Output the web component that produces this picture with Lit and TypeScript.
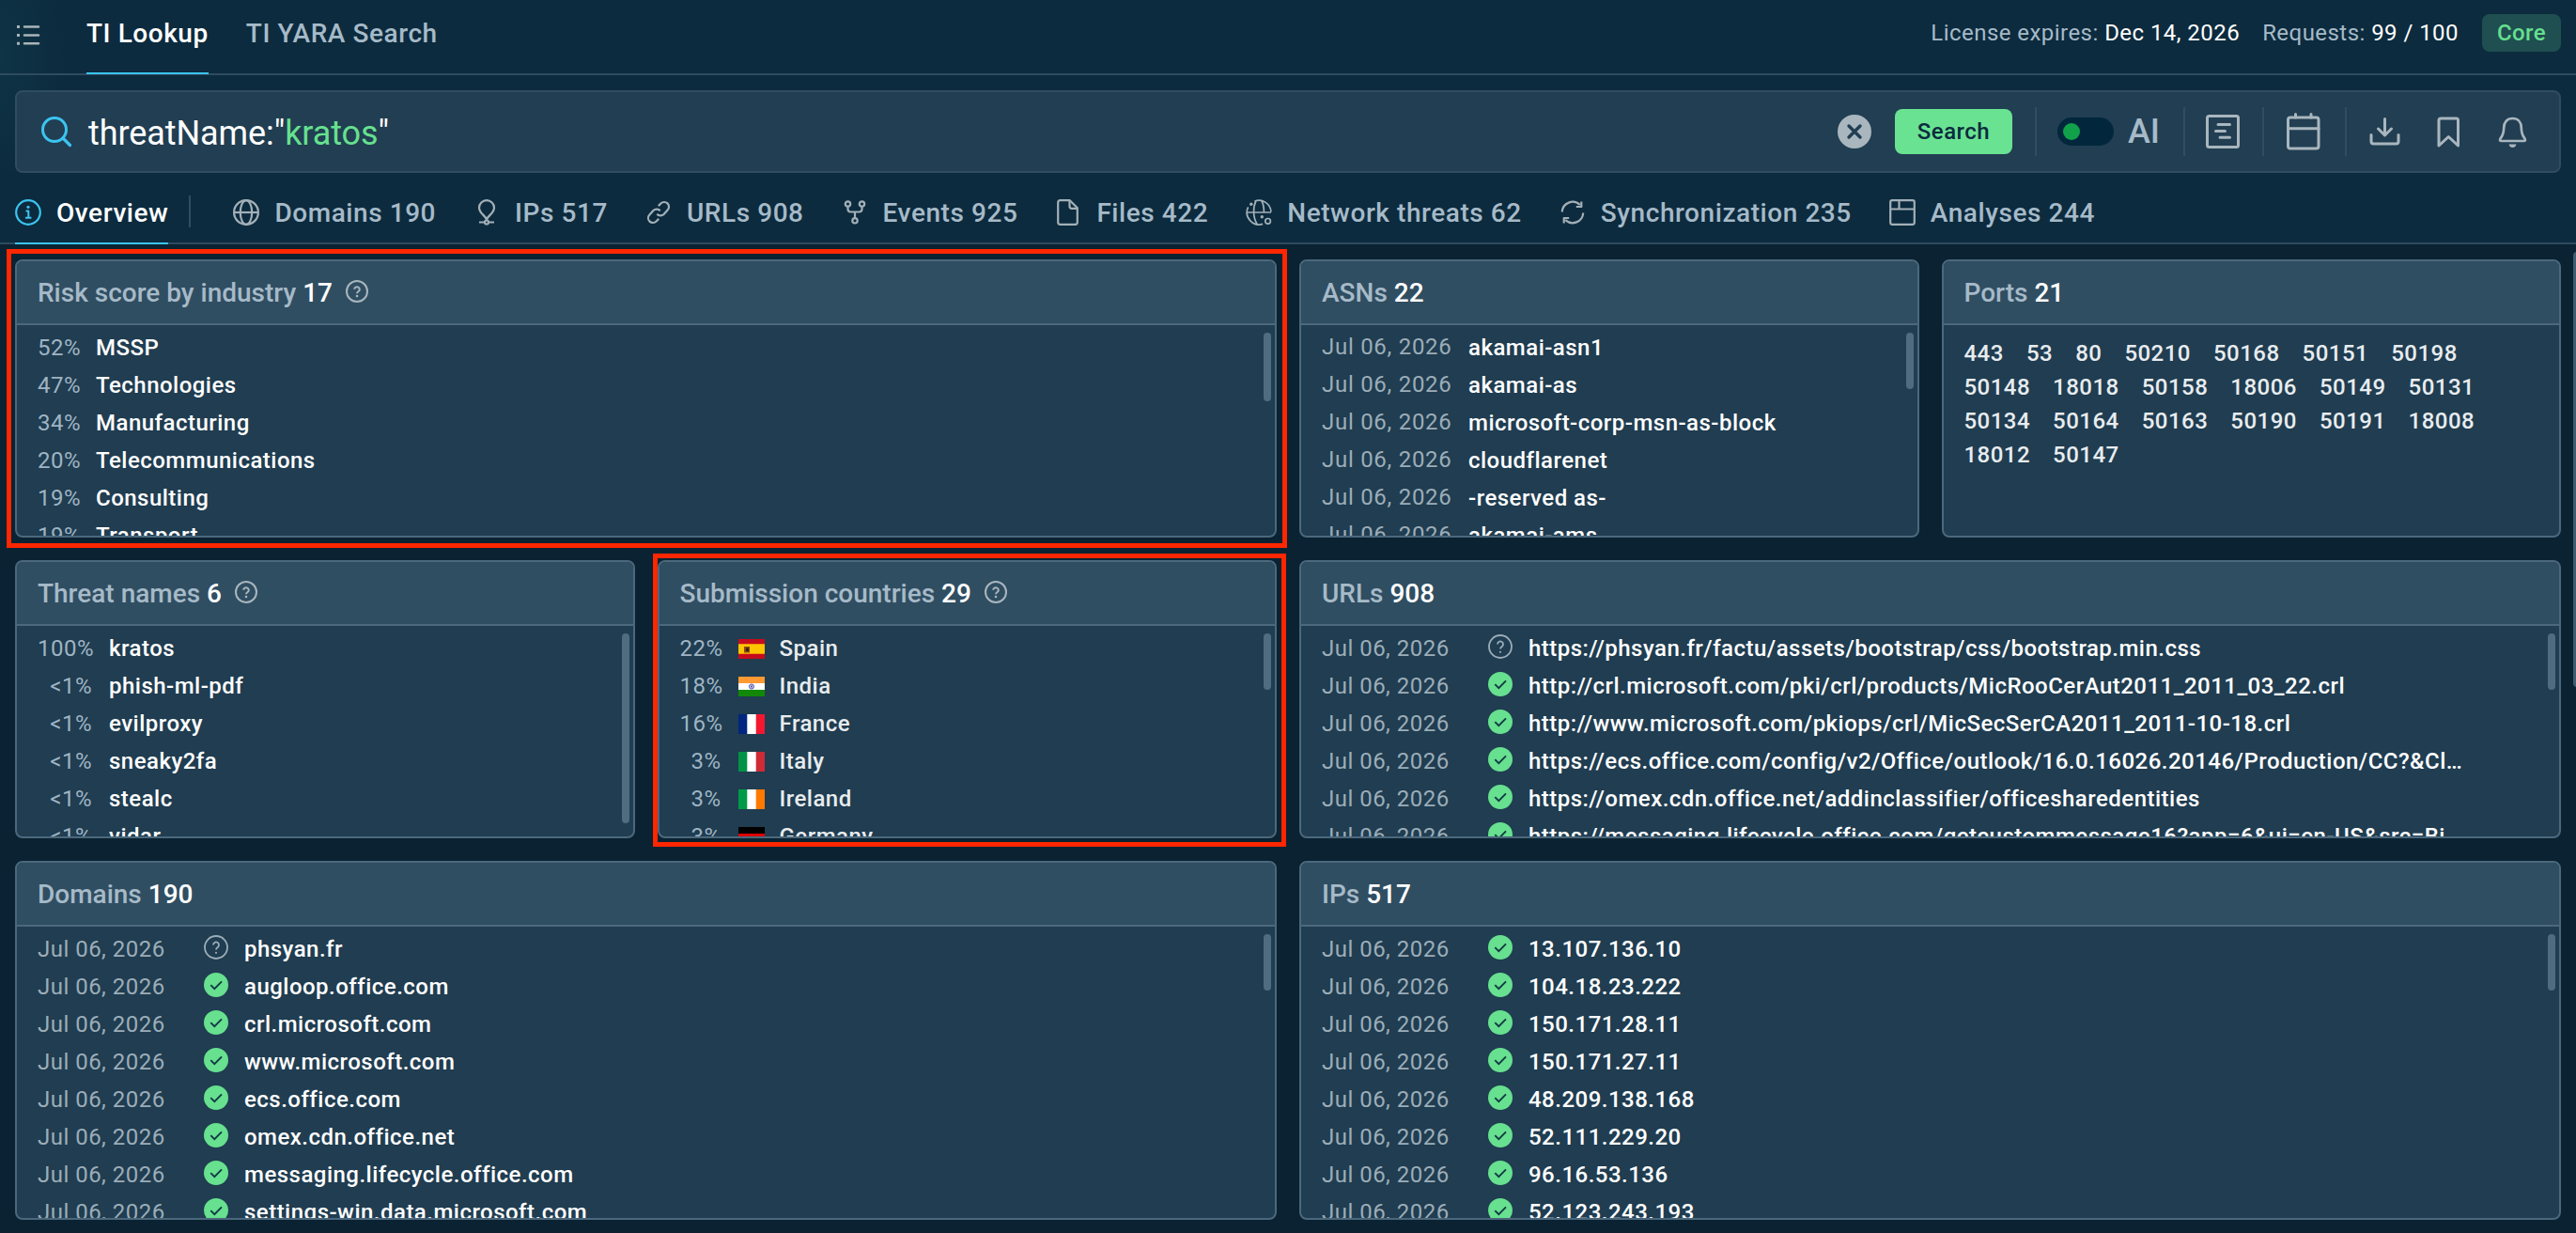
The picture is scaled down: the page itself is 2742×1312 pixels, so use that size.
import { html, css, svg, nothing, LitElement, TemplateResult } from "lit";
import { customElement, property, state } from "lit/decorators.js";
import { classMap } from "lit/directives/class-map.js";
import { styleMap } from "lit/directives/style-map.js";

const icons: Record<string, TemplateResult> = {
  info: svg`
    <circle cx="14" cy="14" r="12.8" stroke-width="2.2" />
    <path d="M11.5 12.5h2.8v7M11 19.7h6.4" stroke-width="2" />
    <circle cx="14" cy="8.3" r="1.6" fill="currentColor" stroke="none" />`,
  globe: svg`
    <circle cx="14" cy="14" r="12.9" />
    <ellipse cx="14" cy="14" rx="6.2" ry="12.9" />
    <path d="M1 14h26" />`,
  pin: svg`
    <path d="M14 21.5c-1.6-4.3-8-6.700-8-12.600a8 7.700 0 0 1 16 0c0 5.900-6.400 8.300-8 12.600z" />
    <circle cx="14" cy="24.500" r="2" />
    <path d="M6 24.500h6M16 24.500h6" />`,
  link: svg`
    <path d="M12.300 15.700a5 5 0 0 0 7.300 0.300l4-4.500a5 5 0 0 0-7.200-7l-2.600 2.600" />
    <path d="M15.700 12.300a5 5 0 0 0-7.300-0.300l-4 4.500a5 5 0 0 0 7.200 7l2.600-2.600" />`,
  fork: svg`
    <circle cx="6.500" cy="5" r="2.700" />
    <circle cx="21.500" cy="5" r="2.700" />
    <circle cx="14" cy="22.800" r="2.700" />
    <path d="M6.500 8v2.500q0 3 3 3h9q3 0 3-3v-2.500M14 13.500v6.500" />`,
  file: svg`
    <path d="M5.500 1.200h10.300l8 8v15.300q0 2.300-2.300 2.300h-16q-2.300 0-2.300-2.300v-21q0-2.300 2.300-2.300z" />
    <path d="M15.500 1.500v6q0 2.300 2.300 2.300h6" />`,
  network: svg`
    <path d="M27 13.500a13 13 0 0 0-17.500-11.400M2.600 8.300a13 13 0 0 0 15.500 18.100" stroke-width="1.700" />
    <path d="M1.200 14h25.800M10.800 2c-3.200 6.500-3.200 17.500 1.200 24.300M17 2c1.800 3.200 2.400 7 2.400 11.500" stroke-width="1.700" />
    <circle cx="5.800" cy="5.300" r="1.700" fill="currentColor" stroke="none" />
    <circle cx="17.300" cy="18.800" r="1.700" fill="currentColor" stroke="none" />
    <circle cx="23.600" cy="23.300" r="2.800" stroke-width="1.700" />`,
  sync: svg`
    <path d="M2.800 13.500a11.200 11.200 0 0 1 19-7.500M25.200 14.500a11.200 11.200 0 0 1-19 7.500" />
    <path d="M23.300 2.500v5.500h-5.500M4.700 25.500v-5.500h5.500" />`,
  window: svg`
    <rect x="1.200" y="1.200" width="25.600" height="25.600" rx="2" />
    <path d="M1.500 10.500h25M10.500 1.500v9" />`,
};

const CHECK = html`<svg class="mark" viewBox="0 0 26 26">
  <circle cx="13" cy="13" r="13" fill="#67e08f" />
  <path d="M7.300 13.200l4 4 7.700-7.800" fill="none" stroke="#123a45" stroke-width="1.900" />
</svg>`;

const UNKNOWN = html`<svg class="mark unknown" viewBox="0 0 26 26">
  <circle cx="13" cy="13" r="12" />
  <path d="M10 10.500a3 3 0 1 1 4.700 2.400q-1.700 1.100-1.700 2.600" />
  <circle cx="13" cy="18.800" r="1.100" fill="currentColor" stroke="none" />
</svg>`;

const flags: Record<string, TemplateResult> = {
  Spain: svg`<path fill="#c60b1e" d="M0 0h28v21H0z" /><path fill="#ffc400" d="M0 5.200h28v10.600H0z" />
    <path fill="#8a4a12" d="M6 8h6v6.500H6z" /><path fill="#3a2020" d="M8 9.500h3v3.500H8z" />`,
  India: svg`<path fill="#fff" d="M0 0h28v21H0z" /><path fill="#ff9933" d="M0 0h28v7H0z" />
    <path fill="#128807" d="M0 14h28v7H0z" />
    <circle cx="14" cy="10.500" r="2.600" fill="#c9c9ea" stroke="#4a4aa8" stroke-width="0.900" />
    <circle cx="14" cy="10.500" r="0.900" fill="#3a3a9c" />`,
  France: svg`<path fill="#fff" d="M0 0h28v21H0z" /><path fill="#00267f" d="M0 0h9.300v21H0z" />
    <path fill="#f31830" d="M18.700 0h9.300v21h-9.300z" />`,
  Italy: svg`<path fill="#fff" d="M0 0h28v21H0z" /><path fill="#009246" d="M0 0h9.300v21H0z" />
    <path fill="#ce2b37" d="M18.700 0h9.300v21h-9.300z" />`,
  Ireland: svg`<path fill="#fff" d="M0 0h28v21H0z" /><path fill="#009a49" d="M0 0h9.300v21H0z" />
    <path fill="#ff7900" d="M18.700 0h9.300v21h-9.300z" />`,
  Germany: svg`<path fill="#ffce00" d="M0 0h28v21H0z" /><path fill="#000" d="M0 0h28v7H0z" />
    <path fill="#dd0000" d="M0 7h28v7H0z" />`,
};

const TABS = [
  ["globe", "Domains 190"],
  ["pin", "IPs 517"],
  ["link", "URLs 908"],
  ["fork", "Events 925"],
  ["file", "Files 422"],
  ["network", "Network threats 62"],
  ["sync", "Synchronization 235"],
  ["window", "Analyses 244"],
];

const INDUSTRIES = [
  ["52%", "MSSP"],
  ["47%", "Technologies"],
  ["34%", "Manufacturing"],
  ["20%", "Telecommunications"],
  ["19%", "Consulting"],
  ["19%", "Transport"],
];

const THREATS = [
  ["100%", "kratos"],
  ["<1%", "phish-ml-pdf"],
  ["<1%", "evilproxy"],
  ["<1%", "sneaky2fa"],
  ["<1%", "stealc"],
  ["<1%", "vidar"],
];

const COUNTRIES = [
  ["22%", "Spain"],
  ["18%", "India"],
  ["16%", "France"],
  ["3%", "Italy"],
  ["3%", "Ireland"],
  ["3%", "Germany"],
];

const ASNS = [
  "akamai-asn1",
  "akamai-as",
  "microsoft-corp-msn-as-block",
  "cloudflarenet",
  "-reserved as-",
  "akamai-ams",
];

const PORTS = [
  443, 53, 80, 50210, 50168, 50151, 50198, 50148, 18018, 50158, 18006, 50149,
  50131, 50134, 50164, 50163, 50190, 50191, 18008, 18012, 50147,
];

const URLS = [
  "https://phsyan.fr/factu/assets/bootstrap/css/bootstrap.min.css",
  "http://crl.microsoft.com/pki/crl/products/MicRooCerAut2011_2011_03_22.crl",
  "http://www.microsoft.com/pkiops/crl/MicSecSerCA2011_2011-10-18.crl",
  "https://ecs.office.com/config/v2/Office/outlook/16.0.16026.20146/Production/CC?&Cl…",
  "https://omex.cdn.office.net/addinclassifier/officesharedentities",
  "https://messaging.lifecycle.office.com/getcustommessage16?app=6&ui=en-US&src=Bi…",
];

const DOMAINS = [
  "phsyan.fr",
  "augloop.office.com",
  "crl.microsoft.com",
  "www.microsoft.com",
  "ecs.office.com",
  "omex.cdn.office.net",
  "messaging.lifecycle.office.com",
  "settings-win.data.microsoft.com",
];

const IPS = [
  "13.107.136.10",
  "104.18.23.222",
  "150.171.28.11",
  "150.171.27.11",
  "48.209.138.168",
  "52.111.229.20",
  "96.16.53.136",
  "52.123.243.193",
];

@customElement("ti-panel")
export class TiPanel extends LitElement {
  static styles = css`
    :host {
      display: flex;
      flex-direction: column;
      position: relative;
      box-sizing: border-box;
      min-width: 0;
      min-height: 0;
      border: 2px solid #4b687c;
      border-radius: 8px;
      background-color: #203d51;
    }

    .head {
      display: flex;
      align-items: center;
      height: 66px;
      padding-left: 22px;
      border-bottom: 2px solid #4b687c;
      border-radius: 6px 6px 0 0;
      background-color: #304e62;
      font-size: 28px;
      font-weight: 500;
      white-space: pre;
      color: #a6bac8;
    }

    .count {
      color: white;
    }

    .help {
      width: 24px;
      height: 24px;
      margin-left: 14px;
      margin-top: -2px;
      fill: none;
      stroke: #a9b6be;
      stroke-width: 2;
      color: #a9b6be;
    }

    .body {
      flex: 1;
      min-height: 0;
      overflow: hidden;
      border-radius: 0 0 6px 6px;
    }

    .thumb {
      position: absolute;
      top: 76px;
      right: 4px;
      width: 8px;
      border-radius: 4px;
      background-color: #506c80;
    }
  `;

  @property() heading = "";
  @property({ type: Number }) count = 0;
  @property({ type: Boolean }) help = false;
  @property({ type: Number }) thumb = 0;

  render() {
    return html`
      <div class="head">
        <span>${this.heading} </span><span class="count">${this.count}</span>
        ${this.help
          ? html`<svg class="help" viewBox="0 0 24 24">
              <circle cx="12" cy="12" r="11" />
              <path d="M9.200 9.800a2.800 2.600 0 1 1 4.400 2.200q-1.600 1-1.600 2.200" />
              <circle cx="12" cy="17" r="1.300" fill="currentColor" stroke="none" />
            </svg>`
          : nothing}
      </div>
      <div class="body"><slot></slot></div>
      ${this.thumb
        ? html`<div class="thumb" style=${styleMap({ height: `${this.thumb}px` })}></div>`
        : nothing}
    `;
  }
}

@customElement("app-root")
export class AppRoot extends LitElement {
  static styles = css`
    :host {
      display: flex;
      flex-direction: column;
      box-sizing: border-box;
      width: 100%;
      height: 1312px;
      overflow: hidden;
      background-color: #0a2231;
      font-family: Roboto, sans-serif;
      color: white;
    }

    .top {
      background: radial-gradient(ellipse 70px 130px at 0 60px, #0e3445, transparent) #0c2b3e;
    }

    .bar {
      display: flex;
      box-sizing: border-box;
      height: 80px;
      padding: 0 16px;
      border-bottom: 2px solid #2e4b5f;
    }

    .list {
      width: 28px;
      height: 28px;
      margin-top: 23px;
      color: #a9b4ba;
    }

    .icon {
      fill: none;
      stroke: currentColor;
      stroke-width: 2.2;
      stroke-linejoin: round;
    }

    .mode {
      box-sizing: border-box;
      height: 79px;
      padding-top: 19px;
      border-bottom: 2px solid transparent;
      margin-right: 40px;
      font-size: 28px;
      line-height: 33px;
      font-weight: 500;
      letter-spacing: 0.02em;
      color: #a6bac8;
    }

    .mode:first-of-type {
      margin-left: 48px;
    }

    .mode.active {
      color: white;
      border-color: #3cc4f0;
    }

    .license {
      display: flex;
      align-items: center;
      height: 40px;
      margin-top: 15px;
      margin-left: auto;
      font-size: 24px;
      letter-spacing: 0.45px;
      color: #a6bac8;
      white-space: pre;
    }

    .license b {
      font-weight: 400;
      color: white;
    }

    .requests {
      margin-left: 24px;
    }

    .plan {
      box-sizing: border-box;
      width: 84px;
      height: 40px;
      margin-left: 25px;
      border-radius: 8px;
      background-color: #1f4f50;
      color: #66df8f;
      font-weight: 500;
      line-height: 40px;
      text-align: center;
    }

    .search {
      display: flex;
      align-items: center;
      box-sizing: border-box;
      height: 88px;
      margin: 16px 16px 0;
      padding-left: 25px;
      border: 2px solid #2f4c60;
      border-radius: 8px;
      background-color: #213e52;
    }

    .glass {
      width: 34px;
      height: 34px;
      color: #3cc4f0;
    }

    .query {
      flex: 1;
      margin-left: 17px;
      padding-top: 3px;
      font-size: 36px;
      letter-spacing: -0.08px;
      color: white;
    }

    .query em {
      font-style: normal;
      color: #67e08f;
    }

    .clear {
      width: 36px;
      height: 36px;
    }

    .go {
      width: 125px;
      height: 48px;
      margin: 0 24px 0 25px;
      padding: 0;
      border: none;
      border-radius: 8px;
      background-color: #69e392;
      color: #0c2b3e;
      font: 500 24px Roboto, sans-serif;
      letter-spacing: 0.02em;
    }

    .sep {
      width: 2px;
      height: 52px;
      background-color: #2f4e63;
    }

    .toggle {
      box-sizing: border-box;
      width: 60px;
      height: 30px;
      margin-left: 22px;
      padding: 6px;
      border-radius: 15px;
      background-color: #02273d;
    }

    .knob {
      width: 18px;
      height: 18px;
      border-radius: 50%;
      background-color: #12a14b;
    }

    .ai {
      width: 59px;
      margin-left: 15px;
      font-size: 36px;
      font-weight: 500;
      color: #a6bac8;
    }

    .tool {
      width: 40px;
      height: 44px;
      color: #a9b6be;
      stroke-width: 3;
      stroke-linecap: round;
    }

    .t-doc {
      margin: 0 22px 0 20px;
    }

    .t-cal {
      margin: 0 24px 0 22px;
    }

    .t-down {
      margin: 0 28px 0 21px;
    }

    .t-mark {
      margin-right: 28px;
    }

    .t-bell {
      margin-right: 29px;
    }

    .tabs {
      display: flex;
      box-sizing: border-box;
      height: 76px;
      padding: 0 16px;
      border-bottom: 2px solid #2e4b5f;
    }

    .tab {
      display: flex;
      align-items: center;
      box-sizing: border-box;
      height: 76px;
      padding-top: 10px;
      border-bottom: 2px solid transparent;
      margin-right: 40px;
      font-size: 28px;
      font-weight: 500;
      letter-spacing: 0.02em;
      color: #a6bac8;
    }

    .tab .icon {
      width: 28px;
      height: 28px;
      margin-right: 16px;
      color: #a3b0b8;
    }

    .tab.active {
      margin-right: 22px;
      color: white;
      border-color: #3cc4f0;
    }

    .tab.active .icon {
      color: #3cc4f0;
    }

    .tabs .sep {
      height: 34px;
      margin: 24px 45px 0 0;
    }

    .board {
      position: relative;
      flex: 1;
      display: grid;
      grid-template-columns: repeat(4, minmax(0, 1fr));
      grid-template-rows: 296px 296px 382px;
      gap: 24px;
      padding: 16px 16px 14px;
    }

    .board::after {
      content: "";
      position: absolute;
      top: 8px;
      right: -5px;
      width: 8px;
      height: 463px;
      border-radius: 4px;
      background-color: #3f5c70;
    }

    .wide {
      grid-column: span 2;
    }

    /* red frames drawn over the two highlighted panels */
    .marked::after {
      content: "";
      position: absolute;
      border: 5px solid #ff2600;
      pointer-events: none;
    }

    .marked.industry::after {
      inset: -13px -13px -13px -11px;
    }

    .marked.country::after {
      inset: -9px -12px -11px -7px;
    }

    .row {
      display: flex;
      align-items: center;
      height: 40px;
      padding: 0 62px 0 22px;
      font-size: 24px;
      letter-spacing: 0.02em;
      white-space: nowrap;
    }

    .row:first-child {
      margin-top: 4px;
    }

    .pct {
      width: 44px;
      margin-right: 18px;
      text-align: right;
      color: #9fb4c3;
    }

    .threat .pct {
      width: 58px;
    }

    .date {
      width: 177px;
      color: #9cadb8;
    }

    .asn .date {
      width: 156px;
      padding-bottom: 3px;
      letter-spacing: 0.03em;
    }

    .name {
      font-weight: 500;
    }

    .country .name {
      color: #e8ecef;
    }

    .flag {
      width: 28px;
      height: 21px;
      margin-right: 16px;
      margin-top: 1px;
    }

    .mark {
      width: 26px;
      height: 26px;
      margin: -4px 17px 0 0;
    }

    .unknown {
      fill: none;
      stroke: #9cadb8;
      stroke-width: 1.800;
      color: #9cadb8;
    }

    .ports {
      display: flex;
      flex-wrap: wrap;
      column-gap: 24px;
      padding: 12px 22px;
      font-size: 24px;
      line-height: 36px;
      font-weight: 500;
      letter-spacing: 0.02em;
      color: #e8ecef;
    }
  `;

  @state() _tab = "Overview";

  _icon(name: string) {
    return html`<svg class="icon" viewBox="0 0 28 28">${icons[name]}</svg>`;
  }

  _shares(rows: string[][], kind: string) {
    return rows.map(
      ([pct, name]) => html`<div class=${classMap({ row: true, [kind]: true })}>
        <span class="pct">${pct}</span>
        ${kind === "country"
          ? html`<svg class="flag" viewBox="0 0 28 21">${flags[name]}</svg>`
          : nothing}
        <span class="name">${name}</span>
      </div>`
    );
  }

  _sightings(rows: string[]) {
    return rows.map(
      (name) => html`<div class="row">
        <span class="date">Jul 06, 2026</span>
        ${name.includes("phsyan.fr") ? UNKNOWN : CHECK}
        <span class="name">${name}</span>
      </div>`
    );
  }

  _tools() {
    return html`
      <svg class="icon tool t-doc" viewBox="0 0 40 44">
        <rect x="3.500" y="5.500" width="33" height="33" rx="2" />
        <path d="M15 14.500h12.500M12.500 21.500h10M17 28.200h10.500" />
      </svg>
      <div class="sep"></div>
      <svg class="icon tool t-cal" viewBox="0 0 40 44">
        <rect x="3.500" y="7" width="32.500" height="33" rx="2.500" />
        <path d="M3.500 18.800h32.500M11.500 3.500v3.500M28 3.500v3.500" />
      </svg>
      <div class="sep"></div>
      <svg class="icon tool t-down" viewBox="0 0 40 44">
        <path d="M19.500 8.500v17M12.500 19l7 7 7-7" />
        <path d="M5 25.500v7q0 2.500 2.500 2.500h24q2.500 0 2.500-2.500v-7" />
      </svg>
      <svg class="icon tool t-mark" viewBox="0 0 40 44">
        <path d="M9 37v-27q0-2 2-2h16.500q2 0 2 2v27l-10.200-9.500z" />
      </svg>
      <svg class="icon tool t-bell" viewBox="0 0 40 44">
        <path d="M19.500 8c-6 0-9.300 4.200-9.300 10 0 6.500-1.800 9-3.700 11.500q-1.200 2.500 1 2.500h24q2.200 0 1-2.500c-1.900-2.500-3.700-5-3.700-11.500 0-5.800-3.300-10-9.300-10z" stroke-width="2.700" />
        <path d="M15.500 35.500h8q-1 3.500-4 3.500t-4-3.500z" fill="currentColor" stroke="none" />
      </svg>
    `;
  }

  render() {
    return html`
      <div class="top">
        <div class="bar">
          <svg class="icon list" viewBox="0 0 28 28">
            <path d="M10 5.500h15M10 14.500h15M10 23.300h15" stroke-width="2.600" stroke-linecap="round" />
            <path d="M2 5.500h3M2 14.500h3M2 23.300h3" stroke-width="3" />
          </svg>
          <div class="mode active">TI Lookup</div>
          <div class="mode">TI YARA Search</div>
          <div class="license">
            <span>License expires: <b>Dec 14, 2026</b></span>
            <span class="requests">Requests: <b>99 / 100</b></span>
            <span class="plan">Core</span>
          </div>
        </div>

        <div class="search">
          <svg class="icon glass" viewBox="0 0 34 34">
            <circle cx="15" cy="15" r="12.500" stroke-width="3" />
            <path d="M24 24l7.500 7.500" stroke-width="3.200" stroke-linecap="round" />
          </svg>
          <div class="query">threatName:"<em>kratos</em>"</div>
          <svg class="clear" viewBox="0 0 36 36">
            <circle cx="18" cy="18" r="18" fill="#a9b6be" />
            <path d="M12 12l12 12M24 12l-12 12" stroke="#213e52" stroke-width="3.400" stroke-linecap="round" />
          </svg>
          <button class="go">Search</button>
          <div class="sep"></div>
          <div class="toggle"><div class="knob"></div></div>
          <div class="ai">AI</div>
          <div class="sep"></div>
          ${this._tools()}
        </div>

        <div class="tabs">
          <div class=${classMap({ tab: true, active: this._tab === "Overview" })}>
            ${this._icon("info")}Overview
          </div>
          <div class="sep"></div>
          ${TABS.map(
            ([icon, label]) => html`<div class=${classMap({ tab: true, active: this._tab === label })}>
              ${this._icon(icon)}${label}
            </div>`
          )}
        </div>
      </div>

      <div class="board">
        <ti-panel class="wide marked industry" heading="Risk score by industry" count="17" thumb="73" help>
          ${this._shares(INDUSTRIES, "share")}
        </ti-panel>
        <ti-panel heading="ASNs" count="22" thumb="60">
          ${ASNS.map(
            (name) => html`<div class="row asn">
              <span class="date">Jul 06, 2026</span><span class="name">${name}</span>
            </div>`
          )}
        </ti-panel>
        <ti-panel heading="Ports" count="21">
          <div class="ports">${PORTS.map((port) => html`<span>${port}</span>`)}</div>
        </ti-panel>
        <ti-panel heading="Threat names" count="6" thumb="202" help>
          ${this._shares(THREATS, "threat")}
        </ti-panel>
        <ti-panel class="marked country" heading="Submission countries" count="29" thumb="60" help>
          ${this._shares(COUNTRIES, "country")}
        </ti-panel>
        <ti-panel class="wide" heading="URLs" count="908" thumb="60">
          ${this._sightings(URLS)}
        </ti-panel>
        <ti-panel class="wide" heading="Domains" count="190" thumb="60">
          ${this._sightings(DOMAINS)}
        </ti-panel>
        <ti-panel class="wide" heading="IPs" count="517" thumb="60">
          ${this._sightings(IPS)}
        </ti-panel>
      </div>
    `;
  }
}

declare global {
  interface HTMLElementTagNameMap {
    "app-root": AppRoot;
    "ti-panel": TiPanel;
  }
}
